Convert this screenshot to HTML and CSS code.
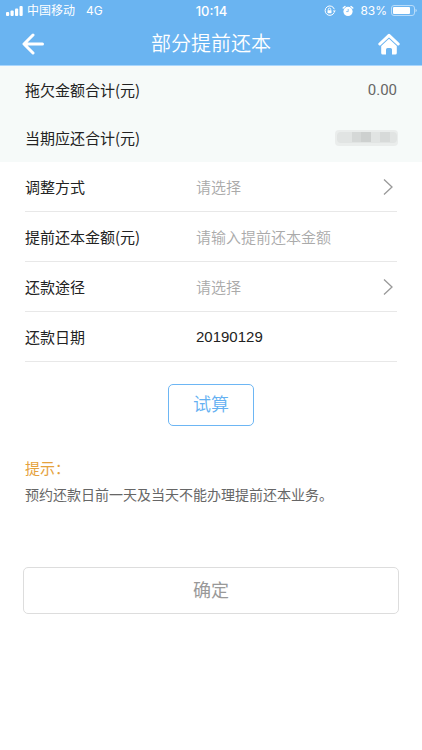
FILE: index.html
```html
<!DOCTYPE html>
<html lang="zh-CN">
<head>
<meta charset="utf-8">
<meta name="viewport" content="width=device-width, initial-scale=1">
<title>部分提前还本</title>
<link rel="stylesheet" href="styles.css">
</head>
<body>
<header class="header">
  <div class="status">
    <div class="status-side">
      <svg class="signal" width="17" height="10" viewBox="0 0 17 10" fill="currentColor" aria-hidden="true">
        <rect x="0" y="6" width="3.2" height="4" rx="1"/>
        <rect x="4.500" y="4.500" width="3.2" height="5.500" rx="1"/>
        <rect x="9" y="2.500" width="3.2" height="7.500" rx="1"/>
        <rect x="13.500" y="0" width="3.2" height="10" rx="1"/>
      </svg>
      <span class="carrier">中国移动</span>
      <span class="network">4G</span>
    </div>
    <time class="clock">10:14</time>
    <div class="status-side status-end">
      <svg width="12" height="12" viewBox="0 0 12 12" fill="none" stroke="currentColor" aria-hidden="true">
        <path d="M10.2 7.4A4.7 4.7 0 1 1 10.3 4.2"/>
        <path d="M8.8 5.4h3l-1.5 2z" fill="currentColor" stroke="none"/>
        <rect x="3.5" y="5.2" width="4" height="3" rx=".4" fill="currentColor" stroke="none"/>
        <path d="M4.3 5.4V4.3a1.2 1.2 0 0 1 2.4 0v1.1" stroke-width=".9"/>
      </svg>
      <svg class="alarm" width="12" height="12" viewBox="0 0 12 12" fill="none" stroke="currentColor" aria-hidden="true">
        <circle cx="6" cy="6.4" r="4.6" fill="currentColor" stroke="none"/>
        <path d="M1.2 3 3 1.400M10.800 3 9 1.400" stroke-width="1.400" stroke-linecap="round"/>
        <path d="M6.200 4v2.600H4.200" stroke="#6ab4f1" stroke-width=".8"/>
      </svg>
      <span>83%</span>
      <svg width="26" height="12" viewBox="0 0 26 12" fill="none" aria-hidden="true">
        <rect x=".5" y=".5" width="23" height="10" rx="2.5" stroke="#b8dcfa"/>
        <rect x="2" y="2" width="17" height="7" rx="1" fill="#fff"/>
        <path d="M24.5 3.8v3.4q1.3-.4 1.3-1.7t-1.3-1.7z" fill="#b8dcfa"/>
      </svg>
    </div>
  </div>
  <nav class="nav">
    <button class="nav-button" type="button" aria-label="返回">
      <svg width="22" height="22" viewBox="0 0 22 22" fill="none" stroke="currentColor" stroke-width="3" stroke-linecap="round" stroke-linejoin="round" aria-hidden="true">
        <path d="M11 2 2 11l9 9M2.500 11h18"/>
      </svg>
    </button>
    <h1 class="title">部分提前还本</h1>
    <button class="nav-button nav-home" type="button" aria-label="首页">
      <svg width="22" height="22" viewBox="0 0 22 22" fill="currentColor" aria-hidden="true">
        <path d="M1.800 11 11 2.300 20.200 11" fill="none" stroke="currentColor" stroke-width="3" stroke-linecap="round" stroke-linejoin="round"/>
        <path d="M11 5.800 18.800 13v7q0 1.500-1.500 1.500H14v-5q0-1.500-1.500-1.500h-3Q8 15 8 16.500v5H4.700q-1.500 0-1.500-1.500v-7z"/>
      </svg>
    </button>
  </nav>
</header>
<main>
  <dl class="summary">
    <div class="summary-row"><dt>拖欠金额合计(元)</dt><dd>0.00</dd></div>
    <div class="summary-row">
      <dt>当期应还合计(元)</dt>
      <dd class="masked">
        <svg width="66" height="18" viewBox="0 0 66 18" aria-hidden="true">
          <rect x="1" y="1" width="63" height="16" rx="4" fill="#eaedec"/>
          <rect x="3" y="3" width="60" height="11" rx="4" fill="#e1e4e3"/>
          <path d="M18 3h9v10h-9z" fill="#d5d8d7"/>
          <path d="M27 3h10v10H27z" fill="#cdd0cf"/>
          <path d="M46 3h10v10H46z" fill="#d7dad9"/>
        </svg>
      </dd>
    </div>
  </dl>
  <form class="form">
    <div class="field">
      <label for="method">调整方式</label>
      <select class="control" id="method"><option>请选择</option></select>
      <svg class="chevron" width="10" height="18" viewBox="0 0 10 18" aria-hidden="true"><path d="m1 1.500 8 7.500-8 7.500"/></svg>
    </div>
    <div class="field">
      <label for="amount">提前还本金额(元)</label>
      <input class="control" id="amount" type="text" placeholder="请输入提前还本金额">
    </div>
    <div class="field">
      <label for="channel">还款途径</label>
      <select class="control" id="channel"><option>请选择</option></select>
      <svg class="chevron" width="10" height="18" viewBox="0 0 10 18" aria-hidden="true"><path d="m1 1.500 8 7.500-8 7.500"/></svg>
    </div>
    <div class="field">
      <label for="date">还款日期</label>
      <input class="control" id="date" type="text" value="20190129" readonly>
    </div>
    <button class="calculate" type="button">试算</button>
    <section class="tips">
      <h2>提示：</h2>
      <p>预约还款日前一天及当天不能办理提前还本业务。</p>
    </section>
    <button class="confirm" type="submit">确定</button>
  </form>
</main>
</body>
</html>
```
FILE: styles.css
```css
* {
  box-sizing: border-box;
}

body {
  margin: 0;
  background: #fff;
  color: #222;
  font-family: "Liberation Sans", "Noto Sans CJK SC", sans-serif;
  font-size: 15px;
  line-height: 24px;
}

h1, h2, p, dl, dd {
  margin: 0;
  font-weight: 400;
}

button, input, select {
  margin: 0;
  padding: 0;
  border: 0;
  background: none;
  color: inherit;
  font: inherit;
}

.header {
  background: #6ab4f1;
  border-bottom: 1px solid #a9d6fd;
  color: #fff;
}

.status {
  display: grid;
  grid-template-columns: 1fr auto 1fr;
  align-items: center;
  height: 22px;
  padding: 0 5px 0 6px;
  font-family: Inter, "Noto Sans CJK SC", sans-serif;
  font-size: 12px;
  line-height: 22px;
}

.status-side {
  display: flex;
  align-items: center;
}

.status-end {
  justify-content: flex-end;
  gap: 4px;
}

.carrier {
  margin-left: 4px;
}

.network {
  margin-left: 11px;
}

.clock {
  font-size: 13px;
  font-weight: 500;
}

.alarm {
  margin: 0 2px;
}

.nav {
  display: flex;
  align-items: center;
  justify-content: space-between;
  height: 43px;
  padding: 0 22px;
}

.nav-button {
  display: flex;
  align-items: center;
  width: 24px;
  height: 40px;
}

.nav-home {
  justify-content: flex-end;
}

.title {
  font-size: 20px;
  font-weight: 350;
}

.summary {
  background: #f6faf9;
}

.summary-row {
  display: flex;
  align-items: center;
  justify-content: space-between;
  height: 48px;
  padding: 0 25px;
}

dt, label {
  font-family: "Noto Sans CJK SC", sans-serif;
}

dd {
  color: #666;
  font-family: Roboto, sans-serif;
}

.masked {
  display: flex;
  margin-right: -3px;
}

.form {
  padding: 0 25px;
}

.field {
  display: grid;
  grid-template-columns: 171px 1fr auto;
  align-items: center;
  height: 50px;
  border-bottom: 1px solid #e8e8e8;
}

.control {
  width: 100%;
  height: 48px;
  outline: 0;
  appearance: none;
}

select.control, .control::placeholder {
  color: #aaa;
  font-weight: 350;
  opacity: 1;
}

select.control, .control:placeholder-shown {
  padding-top: 2px;
}

.chevron {
  margin-right: 4px;
  fill: none;
  stroke: #999;
  stroke-width: 1.3;
}

.calculate {
  display: block;
  width: 86px;
  height: 42px;
  margin: 22px auto 30px;
  border: 1px solid #6db6f4;
  border-radius: 5px;
  color: #65b1f2;
  font-size: 18px;
  font-weight: 350;
}

.tips {
  color: #666;
  font-size: 14px;
  line-height: 26px;
}

.tips h2 {
  color: #e5a23c;
  font-size: 15px;
}

.confirm {
  display: block;
  width: calc(100% + 4px);
  height: 47px;
  margin: 59px -2px 0;
  border: 1px solid #ddd;
  border-radius: 5px;
  color: #999;
  font-size: 18px;
}
```
